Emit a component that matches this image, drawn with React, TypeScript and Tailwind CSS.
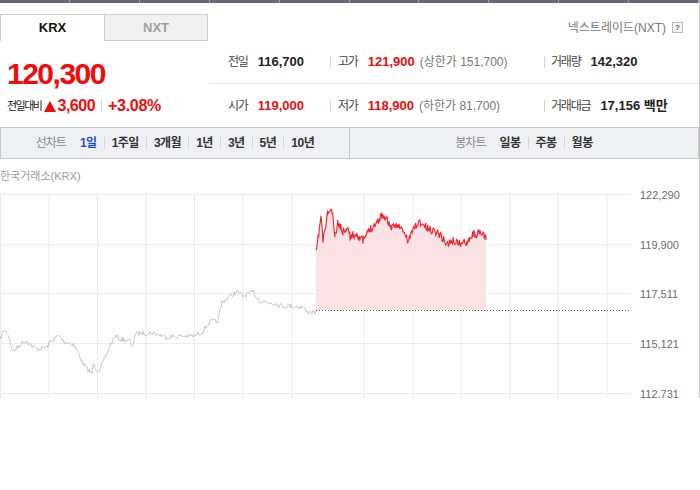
import React from 'react';

const seeded = (seed: number) => {
  let s = seed;
  return () => {
    s = (s * 16807) % 2147483647;
    return (s - 1) / 2147483646;
  };
};

const buildLine = (keys: [number, number][], step: number, amp: number, seed: number) => {
  const r = seeded(seed);
  const pts: [number, number][] = [];
  for (let i = 0; i < keys.length - 1; i++) {
    const [x0, y0] = keys[i];
    const [x1, y1] = keys[i + 1];
    for (let x = x0; x < x1; x += step) {
      const t = (x - x0) / (x1 - x0);
      pts.push([x, y0 + (y1 - y0) * t + (r() - 0.5) * amp]);
    }
  }
  pts.push(keys[keys.length - 1]);
  return pts;
};

const grayKeys: [number, number][] = [
  [0, 340], [4, 331], [8, 335], [13, 353], [18, 348], [23, 343], [27, 342], [32, 347], [38, 350],
  [47, 348], [50, 343], [58, 337], [65, 343], [73, 345], [78, 353], [83, 365], [92, 375], [93, 365],
  [98, 372], [105, 360], [110, 347], [115, 337], [120, 340], [130, 342], [132, 350], [135, 335],
  [143, 334], [153, 334], [167, 338], [180, 337], [195, 337], [202, 333], [210, 323], [218, 322],
  [222, 303], [230, 297], [237, 293], [243, 297], [253, 293], [260, 302], [273, 304], [283, 307],
  [293, 307], [303, 308], [307, 313], [315, 313], [316, 312],
];

const redKeys: [number, number][] = [
  [316, 255], [318, 240], [321, 217], [323, 242], [328, 213], [332, 212], [335, 238], [338, 223],
  [343, 233], [347, 227], [350, 237], [357, 235], [363, 242], [370, 230], [377, 223], [382, 216],
  [387, 220], [392, 230], [397, 225], [403, 232], [408, 242], [415, 227], [420, 223], [428, 230],
  [438, 233], [447, 245], [453, 242], [462, 245], [467, 242], [473, 235], [483, 235], [486, 241],
];

const grayPts = buildLine(grayKeys, 1, 5, 7);
const redPts = buildLine(redKeys, 0.7, 8, 11);
const toStr = (pts: [number, number][]) => pts.map(([x, y]) => `${x.toFixed(1)},${y.toFixed(1)}`).join(' ');
const redArea = `316,311.5 ${toStr(redPts)} 486,311.5`;

const hLines = [195.5, 245.5, 294.5, 344.5, 394.5];
const vLines = [0.5, 49, 97.5, 146, 194.5, 243, 292, 364, 413, 461, 510, 558, 607];
const yLabels = ['122,290', '119,900', '117,511', '115,121', '112,731'];

const Sep = () => <span className="mx-[7px] inline-block h-[12px] w-px bg-[#d5d5d5]" />;

const InfoCell = ({ label, value, red, extra }: { label: string; value: string; red?: boolean; extra?: string }) => (
  <div className="flex items-center">
    <span className="text-[12px] tracking-[-1.2px] text-[#444]">{label}</span>
    <span className={`ml-[10px] text-[13px] font-bold ${red ? 'text-[#f20b0b]' : 'text-[#222]'}`}>{value}</span>
    {extra && <span className="ml-[5px] text-[12px] text-[#777]">{extra}</span>}
  </div>
);

const App = () => {
  return (
    <div className="h-[490px] w-[700px] bg-white font-['Liberation_Sans','Noto_Sans_CJK_KR',sans-serif]">
      <div className="h-[398px] w-[700px] overflow-hidden border-r border-[#c4c4c4]">
        {/* top tab strip, cut off */}
        <div className="flex h-[3px] bg-[#646a73]">
          {Array.from({ length: 10 }).map((_, i) => (
            <div key={i} className="h-full w-[70px] border-r border-[#9ba0a8]" />
          ))}
        </div>

        {/* market tabs */}
        <div className="mt-[11px] flex h-[27px] items-stretch">
          <div className="flex w-[104px] items-center justify-center border-l border-t border-[#cfcfcf] text-[13px] font-bold text-[#111]">
            KRX
          </div>
          <div className="flex w-[104px] items-center justify-center border border-[#cfcfcf] bg-[#f1f1f1] text-[13px] font-bold text-[#a0a0a0]">
            NXT
          </div>
          <div className="flex flex-1 items-center justify-end pr-[16px]">
            <span className="text-[12px] text-[#777]">넥스트레이드(NXT)</span>
            <span className="ml-[6px] flex h-[11px] w-[11px] items-center justify-center border border-[#bbb] bg-[#f6f6f6] text-[8px] font-bold leading-none text-[#666]">
              ?
            </span>
          </div>
        </div>

        {/* price + info */}
        <div className="flex h-[86px]">
          <div className="w-[209px] pl-[7px] pt-[18px]">
            <div className="text-[30px] font-bold leading-[30px] tracking-[-1.5px] text-[#f20b0b]">120,300</div>
            <div className="mt-[5px] flex items-center">
              <span className="text-[11px] tracking-[-1.5px] text-[#222]">전일대비</span>
              <svg width="12" height="11" viewBox="0 0 12 11" className="ml-[3px]">
                <polygon points="6,0 12,11 0,11" fill="#f20b0b" />
              </svg>
              <span className="ml-[1px] text-[16px] font-bold tracking-[-0.5px] text-[#f20b0b]">3,600</span>
              <span className="mx-[6px] inline-block h-[12px] w-px bg-[#d5d5d5]" />
              <span className="text-[16px] font-bold tracking-[-0.3px] text-[#f20b0b]">+3.08%</span>
            </div>
          </div>
          <div className="flex flex-1 flex-col">
            <div className="flex h-[43px] items-center border-b border-[#e6e6e6] pl-[19px]">
              <div className="w-[102px]"><InfoCell label="전일" value="116,700" /></div>
              <span className="h-[12px] w-px bg-[#d5d5d5]" />
              <div className="w-[213px] pl-[7px]"><InfoCell label="고가" value="121,900" red extra="(상한가 151,700)" /></div>
              <span className="h-[12px] w-px bg-[#d5d5d5]" />
              <div className="pl-[6px]"><InfoCell label="거래량" value="142,320" /></div>
            </div>
            <div className="flex h-[43px] items-center pl-[19px]">
              <div className="w-[102px]"><InfoCell label="시가" value="119,000" red /></div>
              <span className="h-[12px] w-px bg-[#d5d5d5]" />
              <div className="w-[213px] pl-[7px]"><InfoCell label="저가" value="118,900" red extra="(하한가 81,700)" /></div>
              <span className="h-[12px] w-px bg-[#d5d5d5]" />
              <div className="pl-[6px]"><InfoCell label="거래대금" value="17,156 백만" /></div>
            </div>
          </div>
        </div>

        {/* chart type bar */}
        <div className="flex h-[32px] border border-[#c8c8c8] bg-[#eff0f4] text-[12px] font-bold tracking-[-0.5px] text-[#333]">
          <div className="flex w-[349px] items-center justify-center border-r border-[#c8c8c8]">
            <span className="mr-[14px] font-normal tracking-[-1px] text-[#888]">선차트</span>
            <span className="text-[#1e4dbf]">1일</span>
            <Sep />
            <span>1주일</span>
            <Sep />
            <span>3개월</span>
            <Sep />
            <span>1년</span>
            <Sep />
            <span>3년</span>
            <Sep />
            <span>5년</span>
            <Sep />
            <span>10년</span>
          </div>
          <div className="flex flex-1 items-center justify-center">
            <span className="mr-[14px] font-normal tracking-[-1px] text-[#888]">봉차트</span>
            <span>일봉</span>
            <Sep />
            <span>주봉</span>
            <Sep />
            <span>월봉</span>
          </div>
        </div>

        <div className="mt-[10px] text-[11px] leading-[14px] text-[#999]">한국거래소(KRX)</div>

        {/* chart */}
        <svg width="699" height="216" viewBox="0 184 699 216" className="block">
          {hLines.map((y) => (
            <line key={y} x1="0" x2="631" y1={y} y2={y} stroke="#ebebeb" strokeWidth="1" />
          ))}
          {vLines.map((x) => (
            <line key={x} x1={x} x2={x} y1="195" y2="400" stroke="#ebebeb" strokeWidth="1" />
          ))}
          {yLabels.map((t, i) => (
            <text key={t} x="640" y={hLines[i] + 4} fontSize="11" fill="#6b6b6b" fontFamily="Liberation Sans, sans-serif">
              {t}
            </text>
          ))}
          <polygon points={redArea} fill="#fbe3e5" />
          <line x1="316" x2="631" y1="311.5" y2="311.5" stroke="#555" strokeWidth="1" strokeDasharray="1 2" />
          <polyline points={toStr(grayPts)} fill="none" stroke="#c9c9cd" strokeWidth="1" />
          <polyline points={toStr(redPts)} fill="none" stroke="#f3202a" strokeWidth="1.1" />
        </svg>
      </div>
    </div>
  );
};

export default App;
